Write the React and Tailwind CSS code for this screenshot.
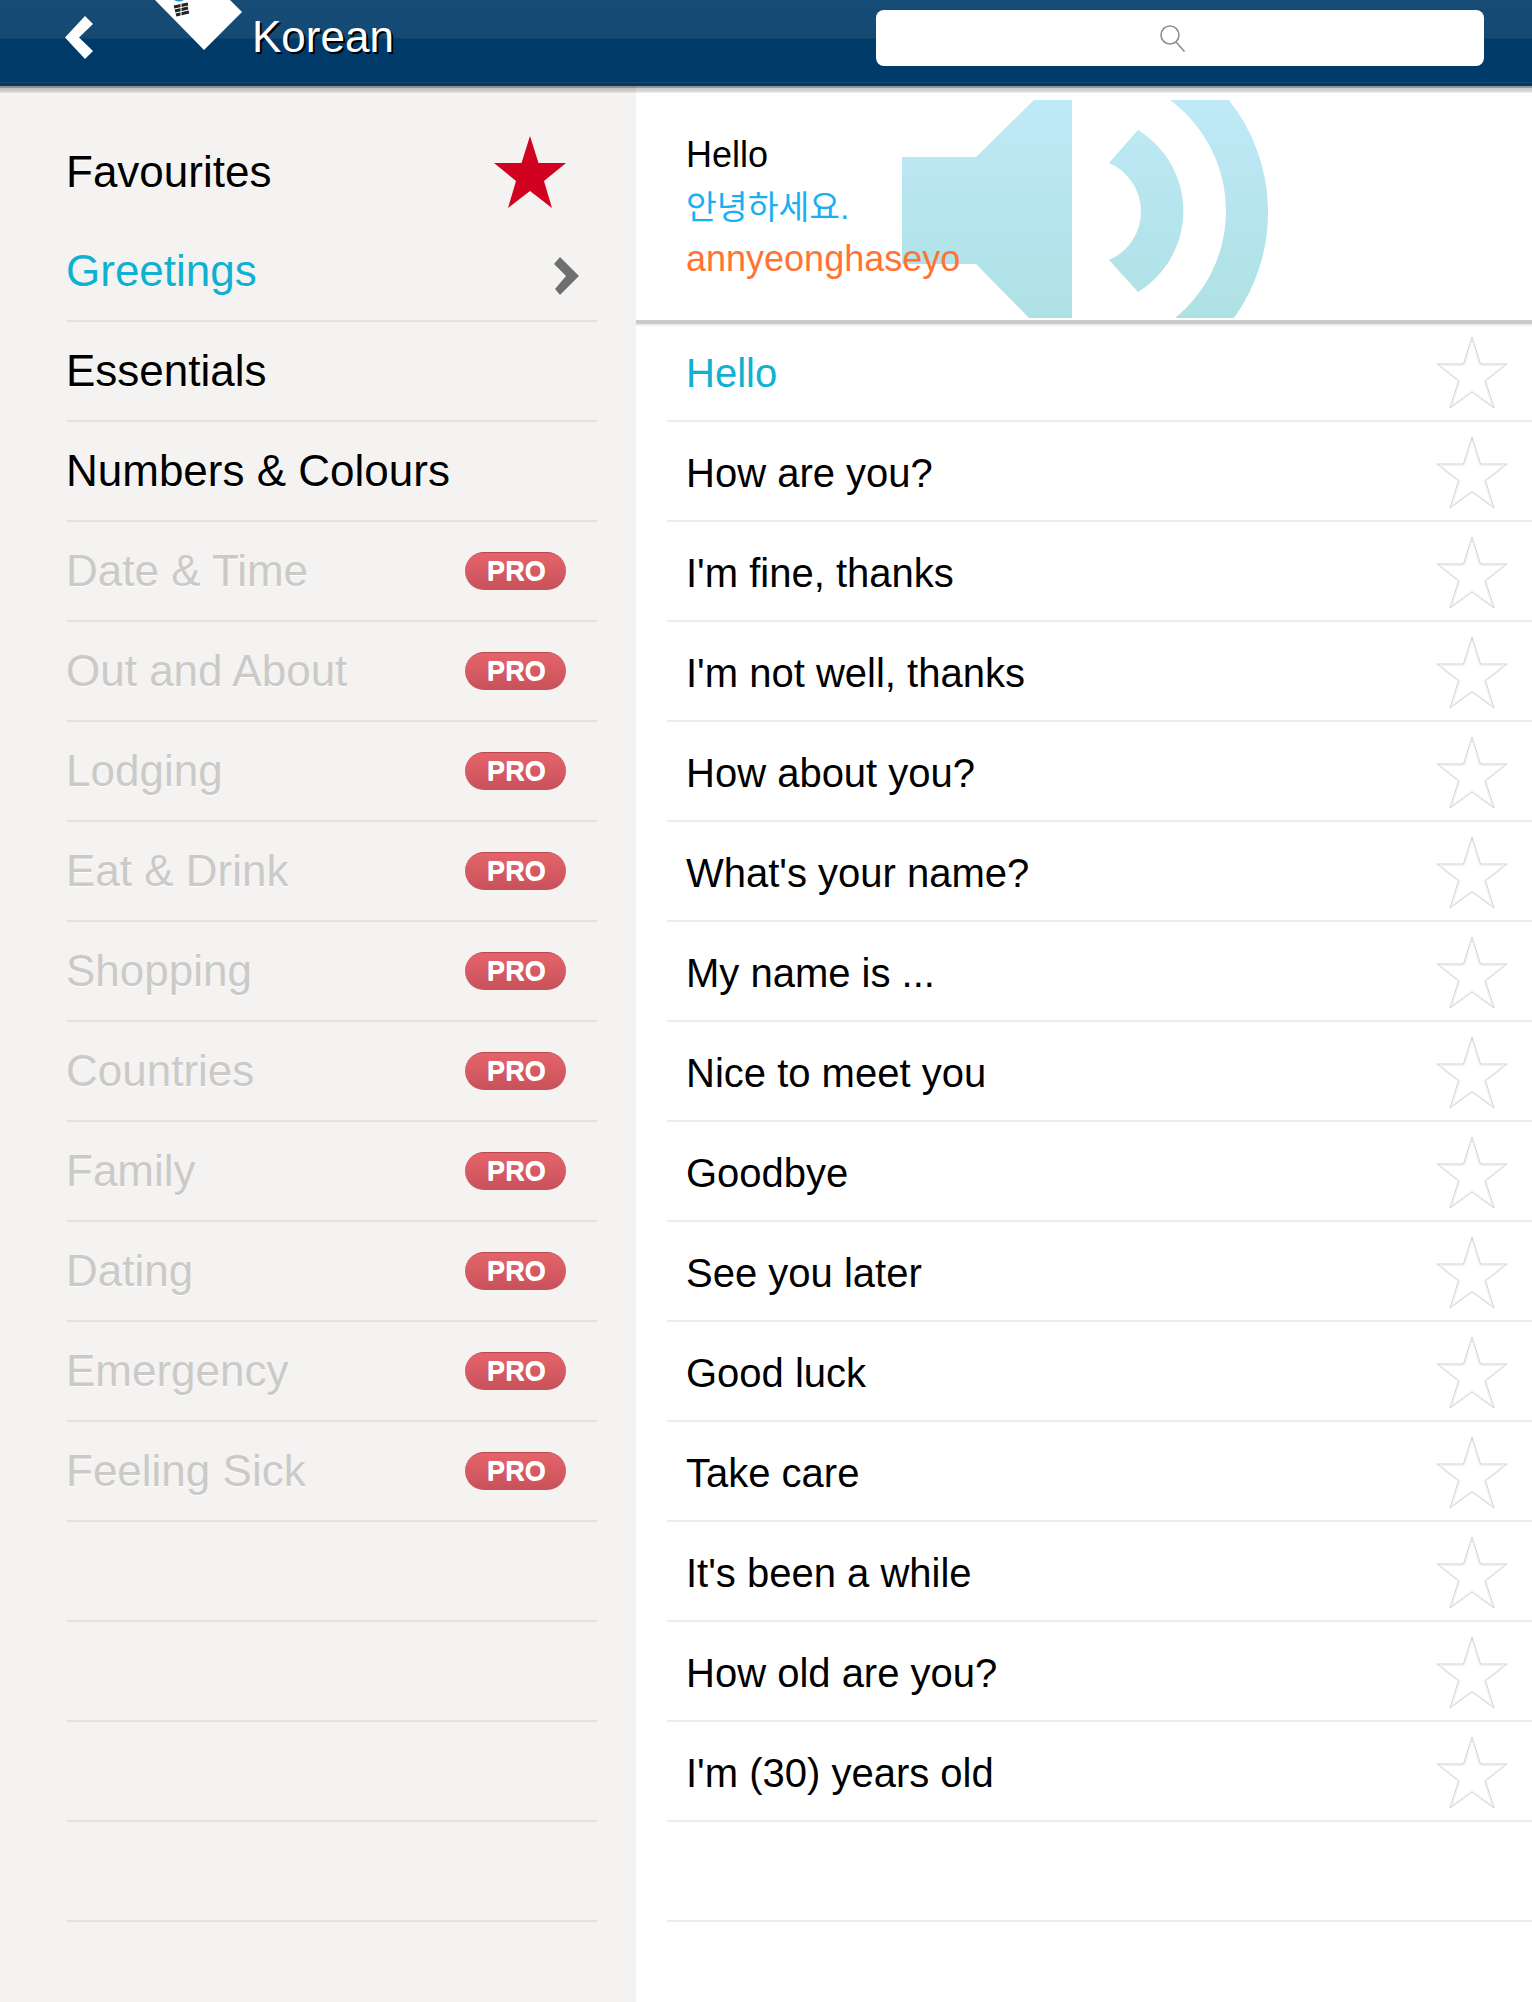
const freeItems = [
  { name: "Favourites", mark: "star" },
  { name: "Greetings", mark: "chevron", active: true, line: true },
  { name: "Essentials", line: true },
  { name: "Numbers & Colours", line: true },
];
const proItems = [
  "Date & Time",
  "Out and About",
  "Lodging",
  "Eat & Drink",
  "Shopping",
  "Countries",
  "Family",
  "Dating",
  "Emergency",
  "Feeling Sick",
];
const phrases = [
  "Hello",
  "How are you?",
  "I'm fine, thanks",
  "I'm not well, thanks",
  "How about you?",
  "What's your name?",
  "My name is ...",
  "Nice to meet you",
  "Goodbye",
  "See you later",
  "Good luck",
  "Take care",
  "It's been a while",
  "How old are you?",
  "I'm (30) years old",
];

function Header() {
  return (
    <header className="relative z-20 h-[86px] shrink-0 flex items-center bg-[linear-gradient(#164b76_0,#144a72_38px,#003a69_39px,#003a69_100%)]">
      <div className="absolute left-0 right-0 top-[82px] h-px bg-[#1d4a6c]" />
      {/* shadow falling on the panels below */}
      <div className="absolute left-0 right-0 top-full h-[7px] bg-[linear-gradient(rgba(0,0,0,0.42),rgba(0,0,0,0.4)_28%,rgba(0,0,0,0.2)_30%,rgba(0,0,0,0.17)_70%,rgba(0,0,0,0.04))]" />
      <svg className="absolute left-[65px] top-[16px]" width="29" height="43" viewBox="0 0 29 43">
        <path d="M20 0 L28 8 L14 21.5 L28 35 L20 43 L0 21.5 Z" fill="#fff" />
      </svg>
      <svg className="absolute left-[150px] top-0" width="96" height="52" viewBox="0 0 96 52">
        <path d="M5 0 H80 L92 12 L54 50 Z" fill="#fff" />
        <path d="M24 0 H34 Q29 3 24 0 Z" fill="#2a8fd0" />
        <path d="M24 7 L38 4 M25 11 L38 8 M26 15 L39 12" stroke="#222" strokeWidth="3" />
        <path d="M31 4 V16" stroke="#fff" strokeWidth="1" />
      </svg>
      <span className="ml-[252px] -mt-[12px] text-[44px] leading-none text-white [text-shadow:2px_2px_0_#000]">
        Korean
      </span>
      <div className="absolute left-[876px] top-[10px] w-[608px] h-[56px] bg-white rounded-[8px] flex items-center justify-center">
        <svg className="mr-[15px]" width="26" height="27" viewBox="0 0 26 27" fill="none" stroke="#8e8e93" strokeWidth="1.6">
          <circle cx="10" cy="10" r="9" />
          <path d="M16 17 L24.5 26.5" />
        </svg>
      </div>
    </header>
  );
}

function Row({ children, line }) {
  return (
    <div className={`h-[100px] flex items-center justify-between ${line ? "border-b-2 border-[#e3e2e0]" : ""}`}>
      {children}
    </div>
  );
}

function ProBadge() {
  return (
    <span className="w-[101px] h-[38px] mr-[31px] pl-[2px] rounded-full bg-[linear-gradient(#e5646b,#c8515a)] border-t border-[#b9474f] flex items-center justify-center text-[27px] font-bold leading-none tracking-[0.2px] text-white">
      PRO
    </span>
  );
}

function Sidebar() {
  return (
    <aside className="w-[636px] shrink-0 bg-[#f4f3f1] pl-[67px] pr-[39px] pt-[36px] [text-shadow:0_1px_0_#fff]">
      {freeItems.map((item) => (
        <Row key={item.name} line={item.line}>
          <span className={`-ml-px text-[44px] leading-none ${item.active ? "text-[#10b0d1]" : "text-black"}`}>{item.name}</span>
          {item.mark === "star" && (
            <svg className="mr-[31px]" width="72" height="72" viewBox="0 0 72 72">
              <path d="M36 0 L44.5 27 H72 L50 45 L58 72 L36 55 L14 72 L22 45 L0 27 H27.5 Z" fill="#d0021f" />
            </svg>
          )}
          {item.mark === "chevron" && (
            <svg className="mr-[17px] mt-[10px]" width="26" height="38" viewBox="0 0 26 38" style={{ filter: "drop-shadow(0 1px 0 #fff)" }}>
              <path d="M6 0 L25 19 L6 38 L1 32 L12 19 L0 7 Z" fill="#6f6f6f" />
            </svg>
          )}
        </Row>
      ))}
      {proItems.map((name) => (
        <Row key={name} line>
          <span className="-ml-px text-[44px] leading-none text-[#cbcac8]">{name}</span>
          <ProBadge />
        </Row>
      ))}
      <Row line />
      <Row line />
      <Row line />
      <Row line />
    </aside>
  );
}

function SpeakerArt() {
  return (
    <svg className="absolute left-[902px] top-[100px]" width="370" height="218" viewBox="902 100 370 218">
      <defs>
        <linearGradient id="speakerFill" x1="0" y1="0" x2="0" y2="1">
          <stop offset="0" stopColor="#bfe9f7" />
          <stop offset="1" stopColor="#aee1e4" />
        </linearGradient>
      </defs>
      <path
        fill="url(#speakerFill)"
        d="M902 157 H976 L1034 100 H1072 V318 H1029 L976 264 H902 Z M1109 163 L1138 130 A95 95 0 0 1 1138 292 L1109 260 A52.75 52.75 0 0 0 1109 163 Z M1170 100 H1229 A181 181 0 0 1 1234 318 H1175 A138 138 0 0 0 1170 100 Z"
      />
    </svg>
  );
}

function PhraseDetail() {
  return (
    <section className="h-[234px] shrink-0 flex flex-col items-start pl-[50px] pt-[43px] bg-white">
      <span className="h-[52px] flex items-center text-[36px] leading-none text-black z-10">Hello</span>
      <span className="h-[52px] pt-[2px] flex items-center text-[33.5px] leading-none text-[#1ab0ef] z-10 [font-family:'Liberation_Sans','Noto_Sans_CJK_KR',sans-serif]">
        안녕하세요.
      </span>
      <span className="h-[52px] flex items-center text-[36px] leading-none text-[#ff7433] z-10">annyeonghaseyo</span>
    </section>
  );
}

function OutlineStar() {
  return (
    <svg className="mr-[24px] mt-[4px]" width="72" height="74" viewBox="0 0 72 74">
      <path
        d="M36 1 L44.5 28 H71 L49.5 45 L58 72 L36 56 L14 72 L22.5 45 L1 28 H27.5 Z"
        fill="#fff"
        stroke="#d0d0d0"
        strokeWidth="1"
      />
      <path
        d="M36 4 L43.5 29.5 H67 L48 44.5 L55.5 69 L36 54.5 L16.5 69 L24 44.5 L5 29.5 H28.5 Z"
        fill="none"
        stroke="#f0f0f0"
        strokeWidth="1"
      />
    </svg>
  );
}

function PhraseList() {
  return (
    <div className="pl-[31px]">
      {phrases.map((text, i) => (
        <div key={text} className="h-[100px] flex items-center justify-between border-b-2 border-[#ebebeb]">
          <span className={`pl-[19px] pt-[4px] text-[40px] leading-none ${i === 0 ? "text-[#10b0d1]" : "text-black"}`}>{text}</span>
          <OutlineStar />
        </div>
      ))}
      <div className="h-[100px] border-b-2 border-[#ebebeb]" />
    </div>
  );
}

export default function App() {
  return (
    <div className="relative w-[1532px] h-[2002px] overflow-hidden flex flex-col bg-white [font-family:'Liberation_Sans',Arial,sans-serif]">
      <Header />
      <div className="flex flex-1 min-h-0">
        <Sidebar />
        <main className="flex-1 min-w-0 flex flex-col">
          <PhraseDetail />
          <div className="relative z-10 h-[6px] shrink-0 bg-[linear-gradient(#cbcbcb_60%,#e6e6e6_60%,#f3f3f3)]" />
          <div className="-mt-[4px]">
            <PhraseList />
          </div>
        </main>
      </div>
      <SpeakerArt />
    </div>
  );
}
